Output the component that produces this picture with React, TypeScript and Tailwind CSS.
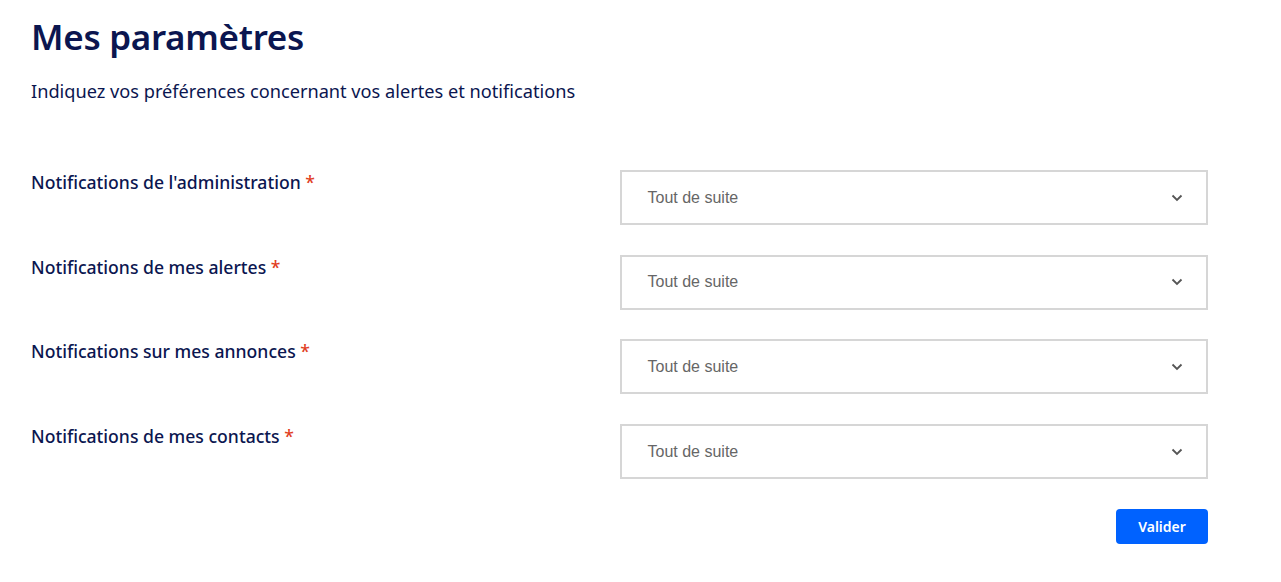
import React from "react";

const rows = [
  "Notifications de l'administration",
  "Notifications de mes alertes",
  "Notifications sur mes annonces",
  "Notifications de mes contacts",
];

function Chevron() {
  return (
    <svg width="12" height="8" viewBox="0 0 12 8" fill="none">
      <path d="M1.5 1.5 L6 6 L10.5 1.5" stroke="#555" strokeWidth="1.8" />
    </svg>
  );
}

export default function App() {
  return (
    <div className="min-h-[582px] bg-white pl-[31px] pt-[13px]">
      <div className="w-[1177px] font-['Noto_Sans',sans-serif] text-[#0b1650]">
        <h1 className="text-[35px] font-semibold leading-[48px] tracking-[-0.3px]">Mes paramètres</h1>
        <p className="mt-[18px] text-[18.2px] leading-[24px]">Indiquez vos préférences concernant vos alertes et notifications</p>
        <div className="mt-[67px] flex flex-col gap-[29.7px]">
          {rows.map((r) => (
            <div key={r} className="grid grid-cols-2">
              <div className="text-[17.6px] font-medium leading-[24px]">
                {r} <span className="text-[#e1401f]">*</span>
              </div>
              <div className="h-[55px] border-2 border-[#d6d6d6] flex items-center justify-between pl-[26px] pr-[23px] font-['Liberation_Sans',sans-serif] text-[16px] text-[#666]">
                <span>Tout de suite</span>
                <Chevron />
              </div>
            </div>
          ))}
        </div>
        <div className="mt-[30px] flex justify-end">
          <button className="h-[35px] w-[92px] rounded-[4px] bg-[#0062ff] text-white text-[14px] font-semibold font-['Noto_Sans',sans-serif]">Valider</button>
        </div>
      </div>
    </div>
  );
}
